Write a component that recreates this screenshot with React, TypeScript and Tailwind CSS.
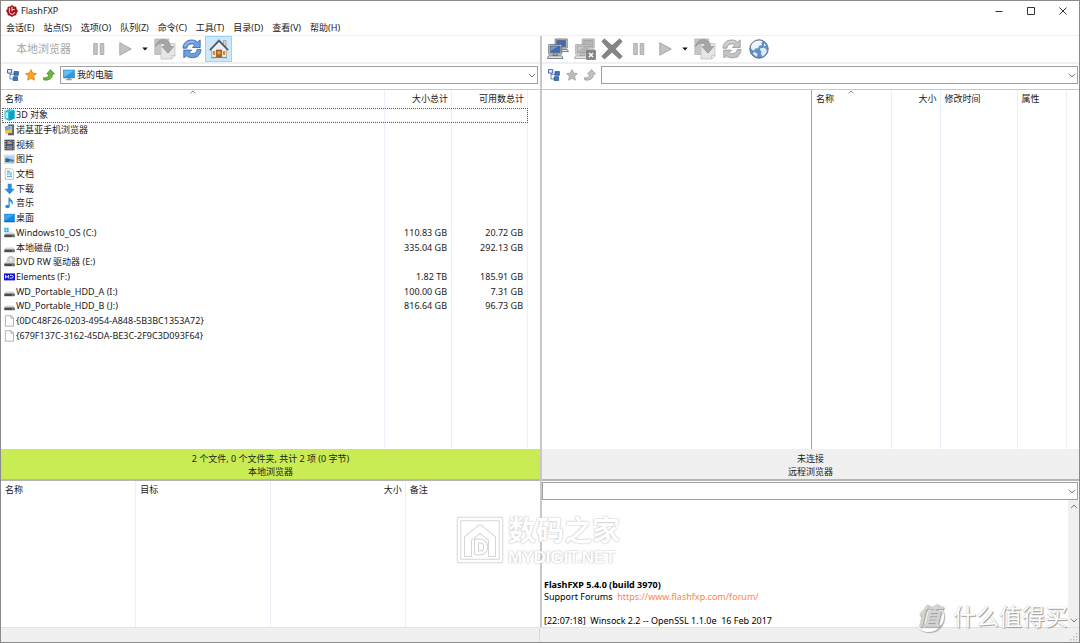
import type { ReactNode } from "react";

const menus = [
  "会话(E)",
  "站点(S)",
  "选项(O)",
  "队列(Z)",
  "命令(C)",
  "工具(T)",
  "目录(D)",
  "查看(V)",
  "帮助(H)",
];

const drives = [
  { icon: "cube", name: "3D 对象", total: "", free: "" },
  { icon: "phone", name: "诺基亚手机浏览器", total: "", free: "" },
  { icon: "video", name: "视频", total: "", free: "" },
  { icon: "picture", name: "图片", total: "", free: "" },
  { icon: "document", name: "文档", total: "", free: "" },
  { icon: "download", name: "下载", total: "", free: "" },
  { icon: "music", name: "音乐", total: "", free: "" },
  { icon: "desktop", name: "桌面", total: "", free: "" },
  { icon: "system", name: "Windows10_OS (C:)", total: "110.83 GB", free: "20.72 GB" },
  { icon: "disk", name: "本地磁盘 (D:)", total: "335.04 GB", free: "292.13 GB" },
  { icon: "dvd", name: "DVD RW 驱动器 (E:)", total: "", free: "" },
  { icon: "wd", name: "Elements (F:)", total: "1.82 TB", free: "185.91 GB" },
  { icon: "disk", name: "WD_Portable_HDD_A (I:)", total: "100.00 GB", free: "7.31 GB" },
  { icon: "disk", name: "WD_Portable_HDD_B (J:)", total: "816.64 GB", free: "96.73 GB" },
  { icon: "file", name: "{0DC48F26-0203-4954-A848-5B3BC1353A72}", total: "", free: "" },
  { icon: "file", name: "{679F137C-3162-45DA-BE3C-2F9C3D093F64}", total: "", free: "" },
];

const diskBody = (
  <>
    <path d="M1.5 5.5h8l1.2 2.2H.3z" fill="#d4d4d4" />
    <path d="M.3 7.5h10.4v2.7H.3z" fill="#4a4a4a" />
    <path d="M8 8.4h1.6v1H8z" fill="#6fe07a" />
  </>
);

const driveIcons: Record<string, ReactNode> = {
  cube: (
    <>
      <path d="M.5 2 4.5.3 10.5 1v8.6L5 11.7.5 9.8z" fill="#2cc0dc" />
      <path d="M5 3.2 10.5 1.6v8L5 11.7z" fill="#0e9fc4" />
      <path d="M1.6 3 4 3.6v5.9L1.6 8.7z" fill="#b8eef8" />
    </>
  ),
  phone: (
    <>
      <path d="M4 .5h6v10.8H4z" fill="#5b6472" />
      <path d="M5.2 2h3v7h-3z" fill="#a9b8c8" />
      <path d="M.6 2.5 5 1.2l1.2 5-4.7 1z" fill="#7da2cc" />
      <path d="M1 7 7 5l1 3-6 2.3z" fill="#f0c53a" />
    </>
  ),
  video: (
    <>
      <path d="M.5.7h10v10.6H.5z" fill="#3d4148" />
      <path d="M2.5 1.4h6v4h-6z" fill="#4b79b8" />
      <path d="M2.5 6.4h6v4.2h-6z" fill="#7f8391" />
      <path d="M3.2 3.8 5.5 2l2.6 3H4z" fill="#d8a24a" />
      <path d="M1 2h.9v1H1zM1 4.4h.9v1H1zM1 6.8h.9v1H1zM1 9.2h.9v1H1zM9.2 2h.9v1h-.9zM9.2 4.4h.9v1h-.9zM9.2 6.8h.9v1h-.9zM9.2 9.2h.9v1h-.9z" fill="#d5d5d5" />
    </>
  ),
  picture: (
    <>
      <path d="M.3 2h10.5v8.4H.3z" fill="#f3f3f3" stroke="#b6bcc2" strokeWidth=".6" />
      <path d="M1.3 3h8.5v6.3H1.3z" fill="#a5d2f7" />
      <path d="M1.3 5.6c3-1 4 1.4 8.5 1.2v2.5H1.3z" fill="#2f6688" />
      <path d="M5 7.7h4.8v1.6H5z" fill="#6fa8cf" />
    </>
  ),
  document: (
    <>
      <path d="M1.3.8h6l2.4 2.3v8.2H1.3z" fill="#fbfcfd" stroke="#a8adb2" strokeWidth=".7" />
      <path d="M3 3.3h3M3 5h5M5.5 6.8H8M3 6.8h1.4M3 8.6h5" stroke="#56a5d8" strokeWidth="1" />
    </>
  ),
  download: <path d="M3.7.8h4v5h3.1L5.7 11.2.4 5.8h3.3z" fill="#2f8be0" />,
  music: (
    <>
      <ellipse cx="3.5" cy="9.5" rx="2.2" ry="1.7" fill="#1b8fe6" />
      <path d="M4.5.5h1.3c.3 2 3 2.5 3.1 5 0 1-.5 1.8-1 2.4.2-2-1-3-2.2-3.6v5.2H4.5z" fill="#1b8fe6" />
    </>
  ),
  desktop: (
    <>
      <path d="M.2 1.8h10.6v8.3H.2z" fill="#1789dc" />
      <path d="M.8 2.4h9.4L.8 8.5z" fill="#39a9f2" />
      <path d="M.2 9.4h10.6v.8H.2z" fill="#0d5fa3" />
    </>
  ),
  system: (
    <>
      <path d="M.3.8h2v2h-2zM2.7.8h2v2h-2zM.3 3.2h2v2h-2zM2.7 3.2h2v2h-2z" fill="#19aee8" />
      {diskBody}
    </>
  ),
  disk: diskBody,
  dvd: (
    <>
      <circle cx="7" cy="4" r="3.7" fill="#cfd2d5" stroke="#a2a5a8" strokeWidth=".5" />
      <circle cx="7" cy="4" r="1.1" fill="#fff" />
      {diskBody}
    </>
  ),
  wd: (
    <>
      <path d="M0 2.4h11v7H0z" fill="#1212dc" />
      <path d="M1.6 4v3.4M1.6 5.8h2.8M4.4 4v3.4M5.8 4.4h1.9c2 0 2 2.7 0 2.7H5.8" fill="none" stroke="#fff" strokeWidth=".9" />
    </>
  ),
  file: <path d="M1.4.7H7l2.5 2.5v8H1.4zM7 .7v2.5h2.5" fill="#fff" stroke="#909090" strokeWidth=".7" />,
};

function DriveIcon({ name }: { name: string }) {
  return (
    <svg viewBox="0 0 11 12" className="h-3 w-[11px] shrink-0" aria-hidden="true">
      {driveIcons[name]}
    </svg>
  );
}

function AppLogo() {
  return (
    <svg viewBox="0 0 12 12" className="size-3" aria-hidden="true">
      <path d="M6 0 8 1.4l2.2.3.4 2.2L12 6l-1.3 2-.5 2.2-2.3.5L6 12l-2-1.3-2.2-.4-.4-2.3L0 6l1.4-2 .4-2.3L4 1.4z" fill="#a5121d" />
      <path d="M3.4 2.8v3.6c0 2 1.2 2.8 2.8 2.8 1.4 0 2.4-.8 2.3-2M6 1.8v4.4M6 4.6h2.7" fill="none" stroke="#fff" strokeWidth=".9" />
    </svg>
  );
}

function PauseIcon() {
  return (
    <svg viewBox="0 0 12 12" className="size-3" aria-hidden="true">
      <path d="M.7.5h3.6v11H.7zM7.2.5h3.6v11H7.2z" fill="#c3c3c3" stroke="#a3a3a3" strokeWidth=".8" />
    </svg>
  );
}

function PlayIcon() {
  return (
    <svg viewBox="0 0 13 14" className="h-[14px] w-[13px]" aria-hidden="true">
      <path d="M.8.8 12.2 7 .8 13.2z" fill="#c3c3c3" stroke="#a0a0a0" strokeWidth=".9" />
    </svg>
  );
}

function CaretIcon() {
  return (
    <svg viewBox="0 0 6 4" className="h-1 w-[6px]" aria-hidden="true">
      <path d="M.3.4h5.4L3 3.6z" fill="#111" />
    </svg>
  );
}

function TransferIcon() {
  return (
    <svg viewBox="0 0 22 22" className="size-[22px]" aria-hidden="true">
      <path d="M.8 1h14v15.5H.8z" fill="#c6c6c6" stroke="#b5b5b5" strokeWidth=".8" />
      <path d="M7 5.5h14v12L17.6 21H7z" fill="#e6e6e6" stroke="#c0c0c0" strokeWidth=".8" />
      <path d="M21 17.5h-3.4V21z" fill="#fafafa" stroke="#b5b5b5" strokeWidth=".6" />
      <path d="M1.5 8.5C3 3.5 6 1.3 9.8 1.6c4.2.3 6.5 3.4 6.7 7h3.2L14 15.2 8 8.6h3.2C11 6.4 9.7 5 7.6 5 5 5 3 6.3 1.5 8.5z" fill="#a6a6a6" stroke="#8f8f8f" strokeWidth=".7" />
    </svg>
  );
}

function RefreshIcon({ blue }: { blue?: boolean }) {
  const fill = blue ? "#6ea0dc" : "#c4c4c4";
  const stroke = blue ? "#2f62a8" : "#979797";
  return (
    <svg viewBox="0 0 20 20" className="size-5" aria-hidden="true">
      <ellipse cx="10" cy="18" rx="8" ry="1.5" fill="#e3e3e3" />
      <g fill={fill} stroke={stroke} strokeWidth=".8" strokeLinejoin="round">
        <path d="M1 9.2C1 4.2 4.7 1 9.6 1c2.4 0 4.3.7 5.9 2L18.2.9v7.6h-7.8l2.4-2.4c-2.8-2.4-7.5-1-8 3.1z" />
        <path d="M19 10.4c0 5-3.7 8.2-8.6 8.2-2.4 0-4.3-.7-5.9-2l-2.7 2.1v-7.6h7.8l-2.4 2.4c2.8 2.4 7.5 1 8-3.1z" />
      </g>
      <path d="M2.7 7.5C3.9 3.9 7.9 1.9 12 3" fill="none" stroke="#fff" strokeOpacity=".55" strokeWidth=".9" />
    </svg>
  );
}

function HomeIcon() {
  return (
    <svg viewBox="0 0 20 20" className="size-5" aria-hidden="true">
      <path d="M14.5 1.5H17V8l-2.5-2.4z" fill="#d5d7d9" stroke="#858585" strokeWidth=".6" />
      <path d="M2.6 9.5 10 2.2l7.4 7.3v8.8H2.6z" fill="#f3f0e8" stroke="#9a958a" strokeWidth=".7" />
      <path d="M10 1.2 1 10.6h18z" fill="#eceef0" />
      <path d="M10 .6.5 10.5l1 .9L10 2.8l8.5 8.6 1-.9z" fill="#565a60" stroke="#45484c" strokeWidth=".4" />
      <path d="M7.4 11h5.2v7.3H7.4z" fill="#b5641c" stroke="#7b3e0b" strokeWidth=".6" />
      <path d="M8.5 12.2h3v3h-3z" fill="#e6a43f" />
      <path d="M3.8 12h2.3v4H3.8zM13.9 12h2.3v4h-2.3z" fill="#c98f4e" />
      <path d="M2 18h5.2v1.2H2zM12.8 18H18v1.2h-5.2z" fill="#8a9b78" />
    </svg>
  );
}

function ComputersIcon({ off }: { off?: boolean }) {
  const screen = off ? "#b5b5b5" : "#3e6cb4";
  const frame = off ? "#9a9a9a" : "#56606e";
  return (
    <svg viewBox="0 0 22 22" className="size-[22px]" aria-hidden="true">
      <g stroke={frame} strokeWidth=".8">
        <path d="M8.2 1h12v9h-12z" fill="#dcdcdc" />
        <path d="M9.7 2.4h9v6.2h-9z" fill={screen} />
        <path d="M11 11.4h9.2l1.2 2.2H11z" fill="#e3e3e3" />
        <path d="M1.7 6.6h13v9.5h-13z" fill="#e2e2e2" />
        <path d="M3.2 8h10v6.6h-10z" fill={screen} />
        <path d="M6 16.1h4.5v1.5H6zM1.6 17.8h13l1.4 2.7H.4z" fill="#e6e6e6" />
      </g>
      <path d="M3.6 8.4h7L3.6 13z" fill="#fff" fillOpacity=".3" />
      {off && (
        <>
          <path d="M12.5 12.5h9v9h-9z" fill="#858585" stroke="#6e6e6e" strokeWidth=".6" />
          <path d="m15 15 4 4m0-4-4 4" stroke="#fff" strokeWidth="1.5" />
        </>
      )}
    </svg>
  );
}

function AbortIcon() {
  return (
    <svg viewBox="0 0 22 22" className="size-[22px]" aria-hidden="true">
      <path d="M3.4.8 11 7.6 18.6.8l2.6 2.6-6.9 7.6 6.9 7.2-2.6 2.9-7.6-6.8-7.6 6.8-2.6-2.9L7.7 11 .8 3.4z" fill="#858585" stroke="#6a6a6a" strokeWidth=".6" />
    </svg>
  );
}

function GlobeIcon() {
  return (
    <svg viewBox="0 0 20 20" className="size-5" aria-hidden="true">
      <circle cx="10" cy="10" r="9.2" fill="#5d90cd" stroke="#66707e" strokeWidth="1" />
      <path d="M4 3.8C7 1.2 11 1 13.6 2.2l-1.3 2 .8 1.8-2.8.7-1.2 2.5-2.9.4L4.8 12 2 9.4C1.8 7 2.5 5.2 4 3.8z" fill="#eef4fb" />
      <path d="m11.5 9.2 3.8-.6 2.7 2.6c-.4 2.8-2 5.2-4.6 6.4l-1.6-2.8.7-2.4-1.8-1.6zM5.4 13l3 1.5-.3 3.2c-2-.6-3.4-2-4.4-3.4z" fill="#dfeaf6" />
      <path d="m15 4.2 2 2.2-2 .8z" fill="#eef4fb" />
      <path d="M2.3 7.6C4 3 8.5.9 13.3 2.4 10 3.3 5 4.2 2.3 7.6z" fill="#fff" fillOpacity=".45" />
    </svg>
  );
}

function TreeIcon() {
  return (
    <svg viewBox="0 0 12 12" className="size-3" aria-hidden="true">
      <path d="M3 4v6h4M3 5.3h5" fill="none" stroke="#4c6c9e" strokeWidth=".8" />
      <path d="M.5.5h4.2v3.6H.5z" fill="#dce8f6" stroke="#2d5fa8" strokeWidth=".9" />
      <path d="M7 2.5h4.4v3.8H7zM6.2 7.7h4.4v3.8H6.2z" fill="#3d74bd" stroke="#234f90" strokeWidth=".7" />
    </svg>
  );
}

function StarIcon({ gold }: { gold?: boolean }) {
  return (
    <svg viewBox="0 0 12 12" className="size-3" aria-hidden="true">
      <path d="m6 .6 1.7 3.5 3.8.5-2.8 2.7.7 3.9L6 9.3l-3.4 1.9.7-3.9L.5 4.6l3.8-.5z" fill={gold ? "#fba51c" : "#bcbcbc"} stroke={gold ? "#d9790f" : "#9d9d9d"} strokeWidth=".7" />
    </svg>
  );
}

function UpIcon({ green }: { green?: boolean }) {
  return (
    <svg viewBox="0 0 12 12" className="size-3" aria-hidden="true">
      <path d="M7.5.6 11.6 5H9.5c.2 4-3 6.8-8.7 6L.5 8.6c3.4.7 5.2-.6 5.2-3.6H3.6z" fill={green ? "#6cb83d" : "#c3c3c3"} stroke={green ? "#43862a" : "#929292"} strokeWidth=".7" />
    </svg>
  );
}

function Chevron({ up }: { up?: boolean }) {
  return (
    <svg viewBox="0 0 8 5" className="h-[5px] w-2" aria-hidden="true">
      <path d={up ? "M1 4.2 4 1l3 3.2" : "M1 .8 4 4l3-3.2"} fill="none" stroke="#777" strokeWidth="1" />
    </svg>
  );
}

function ToolButton({ label, active, children }: { label: string; active?: boolean; children: ReactNode }) {
  return (
    <button
      type="button"
      aria-label={label}
      className={
        active
          ? "flex h-[26px] w-[27px] items-center justify-center border border-[#99d1ff] bg-[#cce8ff]"
          : "flex h-[26px] w-[27px] items-center justify-center"
      }
    >
      {children}
    </button>
  );
}

function SmallButton({ label, children }: { label: string; children: ReactNode }) {
  return (
    <button type="button" aria-label={label} className="flex h-[18px] w-[18px] items-center justify-center">
      {children}
    </button>
  );
}

function MoreButton() {
  return (
    <button type="button" aria-label="更多" className="flex h-[26px] w-3 items-center justify-center">
      <CaretIcon />
    </button>
  );
}

function Combo({ label, value, icon }: { label: string; value: string; icon?: ReactNode }) {
  return (
    <div className="relative flex-1">
      {icon && <span className="absolute top-[3px] left-[3px]">{icon}</span>}
      <select
        aria-label={label}
        className={
          icon
            ? "block h-[18px] w-full appearance-none border border-[#a0a0a0] bg-white pl-4 text-[9px] leading-4 outline-none"
            : "block h-[18px] w-full appearance-none border border-[#a0a0a0] bg-white pl-1 text-[9px] leading-4 outline-none"
        }
      >
        <option>{value}</option>
      </select>
      <span className="pointer-events-none absolute top-[7px] right-[2px]">
        <Chevron />
      </span>
    </div>
  );
}

function SortMark() {
  return (
    <span className="absolute top-0 left-1/2 -translate-x-1/2">
      <svg viewBox="0 0 7 4" className="h-1 w-[7px]" aria-hidden="true">
        <path d="M1 3.4 3.5.9 6 3.4" fill="none" stroke="#777" strokeWidth=".9" />
      </svg>
    </span>
  );
}

const localCols = "grid grid-cols-[1fr_67px_76px_12px]";
const line = "border-r border-[#e9f0f8]";

function LocalList() {
  return (
    <div className="flex min-h-0 flex-1 flex-col bg-white">
      <table className="flex flex-col">
        <thead className="block">
          <tr className={localCols}>
            <th className={`relative h-[18px] pl-1 text-left font-normal leading-[17px] ${line}`}>
              名称
              <SortMark />
            </th>
            <th className={`h-[18px] pr-[3px] text-right font-normal leading-[17px] ${line}`}>大小总计</th>
            <th className={`h-[18px] pr-[3px] text-right font-normal leading-[17px] ${line}`}>可用数总计</th>
          </tr>
        </thead>
        <tbody className="grid h-[235px] auto-rows-fr">
          {drives.map((d, i) => (
            <tr key={d.name} className={`relative items-stretch ${localCols}`}>
              <td className={`flex items-center gap-px pl-[3px] ${line}`}>
                <DriveIcon name={d.icon} />
                <span className="whitespace-nowrap leading-3">{d.name}</span>
                {i === 0 && (
                  <span className="absolute inset-y-0 right-3 left-px border border-dotted border-[#555]" />
                )}
              </td>
              <td className={`flex items-center justify-end pr-1 leading-3 ${line}`}>{d.total}</td>
              <td className={`flex items-center justify-end pr-1 leading-3 ${line}`}>{d.free}</td>
            </tr>
          ))}
        </tbody>
      </table>
      <div className={`flex-1 ${localCols}`} aria-hidden="true">
        <span className={line} />
        <span className={line} />
        <span className={line} />
      </div>
    </div>
  );
}

function RemoteList() {
  return (
    <div className="flex min-h-0 flex-1 bg-white">
      <div className="flex-1 border-r border-[#a0a0a0]" />
      <table className="h-full w-[267px] table-fixed">
        <thead>
          <tr className="h-[17px] leading-[17px]">
            <th className={`relative w-[79px] p-0 pl-1 text-left font-normal ${line}`}>
              名称
              <SortMark />
            </th>
            <th className={`w-[49px] p-0 pr-[3px] text-right font-normal ${line}`}>大小</th>
            <th className={`w-[77px] p-0 pl-1 text-left font-normal ${line}`}>修改时间</th>
            <th className={`w-[49px] p-0 pl-1 text-left font-normal ${line}`}>属性</th>
            <th className="p-0" />
          </tr>
        </thead>
        <tbody>
          <tr>
            <td className={line} />
            <td className={line} />
            <td className={line} />
            <td className={line} />
            <td />
          </tr>
        </tbody>
      </table>
    </div>
  );
}

function QueueList() {
  return (
    <table className="h-full w-full table-fixed bg-white">
      <thead>
        <tr className="h-[18px] leading-[18px]">
          <th className={`w-1/4 p-0 pl-1 text-left font-normal ${line}`}>名称</th>
          <th className={`w-1/4 p-0 pl-1 text-left font-normal ${line}`}>目标</th>
          <th className={`w-1/4 p-0 pr-[3px] text-right font-normal ${line}`}>大小</th>
          <th className="w-1/4 p-0 pl-1 text-left font-normal">备注</th>
        </tr>
      </thead>
      <tbody>
        <tr>
          <td className={line} />
          <td className={line} />
          <td className={line} />
          <td />
        </tr>
      </tbody>
    </table>
  );
}

function Log() {
  return (
    <div className="flex min-h-0 flex-1 flex-col bg-white">
      <div className="flex pt-px pr-px">
        <Combo label="命令" value="" />
      </div>
      <div className="flex min-h-0 flex-1">
        <div className="flex flex-1 flex-col justify-end pl-[2px] leading-3 whitespace-pre text-black">
          <p className="font-bold">FlashFXP 5.4.0 (build 3970)</p>
          <p>
            {"Support Forums  "}
            <a href="https://www.flashfxp.com/forum/" className="text-[#ff8548]">
              https://www.flashfxp.com/forum/
            </a>
          </p>
          <p className="mt-3">{"[22:07:18]  Winsock 2.2 -- OpenSSL 1.1.0e  16 Feb 2017"}</p>
        </div>
        <div className="flex w-[11px] flex-col items-center justify-between bg-[#f0f0f0] py-1">
          <Chevron up />
          <Chevron />
        </div>
      </div>
    </div>
  );
}

function HouseMark() {
  return (
    <div className="pointer-events-none absolute bottom-[74px] left-1/2 flex -translate-x-[84px] items-center gap-1 font-bold text-white [text-shadow:0_0_2px_#bbb,0_0_1px_#ccc]">
      <svg viewBox="0 0 48 48" className="size-12" aria-hidden="true">
        <g fill="none" strokeLinejoin="round">
          <path d="M3 3h42v42H3z" stroke="#d6d6d6" strokeWidth="4.5" />
          <path d="M9 40V21L24 9l15 12v19h-6V24l-9-7-9 7v16z" stroke="#d6d6d6" strokeWidth="2" />
          <path d="M3 3h42v42H3z" stroke="#fff" strokeWidth="2.5" />
          <path d="M9 40V21L24 9l15 12v19h-6V24l-9-7-9 7v16z" fill="#fff" />
          <path d="M20.5 25v12h3.2c8 0 8-12 0-12z" stroke="#d2d2d2" strokeWidth="5" />
          <path d="M20.5 25v12h3.2c8 0 8-12 0-12z" stroke="#fff" strokeWidth="3" />
        </g>
      </svg>
      <div>
        <p className="text-[28px] leading-9">数码之家</p>
        <p className="font-['Liberation_Sans',sans-serif] text-[17px] leading-5">MYDIGIT.NET</p>
      </div>
    </div>
  );
}

function SiteMark() {
  return (
    <div className="pointer-events-none absolute right-[11px] bottom-[10px] flex items-center gap-[9px] text-white [text-shadow:1px_1px_1px_#999,0_0_1px_#aaa]">
      <span className="flex size-[31px] items-center justify-center rounded-full bg-white text-[24px] leading-none font-bold text-[#d4d4d4] italic shadow-[1px_1px_1px_#aaa]">
        值
      </span>
      <span className="text-[23px] leading-8">什么值得买</span>
    </div>
  );
}

export default function App() {
  return (
    <div className="relative flex h-screen min-h-[560px] flex-col overflow-hidden border border-[#8a8a8a] bg-white font-['Noto_Sans','Noto_Sans_CJK_SC',sans-serif] text-[9px] text-[#1a1a1a]">
      <header>
        <div className="flex h-5 items-center justify-between pl-[5px]">
          <h1 className="flex items-center gap-[3px]">
            <AppLogo />
            FlashFXP
          </h1>
          <div className="flex">
            <button type="button" aria-label="最小化" className="flex h-5 w-8 items-center justify-center">
              <svg viewBox="0 0 8 8" className="size-2" aria-hidden="true">
                <path d="M.5 4.5h7" stroke="#333" />
              </svg>
            </button>
            <button type="button" aria-label="最大化" className="flex h-5 w-8 items-center justify-center">
              <svg viewBox="0 0 8 8" className="size-2" aria-hidden="true">
                <path d="M.5.5h7v7h-7z" fill="none" stroke="#333" />
              </svg>
            </button>
            <button type="button" aria-label="关闭" className="flex h-5 w-8 items-center justify-center">
              <svg viewBox="0 0 8 8" className="size-2" aria-hidden="true">
                <path d="m.5.5 7 7m0-7-7 7" stroke="#333" />
              </svg>
            </button>
          </div>
        </div>
        <nav className="flex h-[15px] gap-px border-b border-[#f0f0f0] pl-px">
          {menus.map((m) => (
            <button key={m} type="button" className="px-1 leading-[14px]">
              {m}
            </button>
          ))}
        </nav>
      </header>

      <main className="grid min-h-0 flex-1 grid-cols-2">
        <section className="flex min-h-0 flex-col">
          <div className="flex h-7 items-start border-b-2 border-[#f0f0f0]">
            <span className="w-[84px] pl-[15px] text-[11px] leading-[26px] text-[#a6a6a6]">本地浏览器</span>
            <ToolButton label="暂停"><PauseIcon /></ToolButton>
            <ToolButton label="开始"><PlayIcon /></ToolButton>
            <MoreButton />
            <ToolButton label="传输"><TransferIcon /></ToolButton>
            <ToolButton label="刷新"><RefreshIcon blue /></ToolButton>
            <ToolButton label="主页" active><HomeIcon /></ToolButton>
          </div>
          <div className="flex h-[26px] items-start border-b border-[#c8c8c8] pt-[2px] pr-[2px] pl-[3px]">
            <SmallButton label="目录树"><TreeIcon /></SmallButton>
            <SmallButton label="收藏"><StarIcon gold /></SmallButton>
            <SmallButton label="上级目录"><UpIcon green /></SmallButton>
            <div className="flex flex-1 pl-[2px]">
              <Combo
                label="路径"
                value="我的电脑"
                icon={
                  <svg viewBox="0 0 12 12" className="size-3" aria-hidden="true">
                    <path d="M.3 1h11.4v8H.3z" fill="#2b9be6" stroke="#5b7d96" strokeWidth=".6" />
                    <path d="M.8 1.5h10.4L.8 8z" fill="#63bff5" />
                    <path d="M4.5 9h3v1.4h-3zM3 10.2h6v1H3z" fill="#8b9aa5" />
                  </svg>
                }
              />
            </div>
          </div>
          <LocalList />
          <div className="h-8 border-b-2 border-[#b5b5b5] bg-[#c9ec54] pt-[3px] text-center leading-[13px] text-[#222]">
            <p>2 个文件, 0 个文件夹, 共计 2 项 (0 字节)</p>
            <p>本地浏览器</p>
          </div>
        </section>

        <section className="flex min-h-0 flex-col border-l-2 border-[#c8c8c8]">
          <div className="flex h-7 items-start border-b-2 border-[#f0f0f0] pl-[2px]">
            <ToolButton label="连接"><ComputersIcon /></ToolButton>
            <ToolButton label="断开"><ComputersIcon off /></ToolButton>
            <ToolButton label="中止"><AbortIcon /></ToolButton>
            <ToolButton label="暂停"><PauseIcon /></ToolButton>
            <ToolButton label="开始"><PlayIcon /></ToolButton>
            <MoreButton />
            <ToolButton label="传输"><TransferIcon /></ToolButton>
            <ToolButton label="刷新"><RefreshIcon /></ToolButton>
            <ToolButton label="浏览网页"><GlobeIcon /></ToolButton>
          </div>
          <div className="flex h-[26px] items-start border-b border-[#c8c8c8] pt-[2px] pr-px pl-[3px]">
            <SmallButton label="目录树"><TreeIcon /></SmallButton>
            <SmallButton label="收藏"><StarIcon /></SmallButton>
            <SmallButton label="上级目录"><UpIcon /></SmallButton>
            <div className="flex flex-1 pl-[2px]">
              <Combo label="远程路径" value="" />
            </div>
          </div>
          <RemoteList />
          <div className="h-8 border-b-2 border-[#b5b5b5] bg-[#f0f0f0] pt-[3px] text-center leading-[13px] text-[#222]">
            <p>未连接</p>
            <p>远程浏览器</p>
          </div>
        </section>
      </main>

      <div className="grid h-[146px] shrink-0 grid-cols-2">
        <section className="min-h-0">
          <QueueList />
        </section>
        <section className="flex min-h-0 flex-col border-l-2 border-[#c8c8c8]">
          <Log />
        </section>
      </div>

      <footer className="grid h-[15px] shrink-0 grid-cols-2 border-t border-[#e2e2e2] bg-[#f0f0f0]">
        <div className="border-r border-[#d8d8d8]" />
        <div className="flex items-end justify-end p-px">
          <svg viewBox="0 0 8 8" className="size-2" aria-hidden="true">
            <path d="M6 0h1.4v1.4H6zM6 3h1.4v1.4H6zM6 6h1.4v1.4H6zM3 3h1.4v1.4H3zM3 6h1.4v1.4H3zM0 6h1.4v1.4H0z" fill="#bdbdbd" />
          </svg>
        </div>
      </footer>

      <HouseMark />
      <SiteMark />
    </div>
  );
}
